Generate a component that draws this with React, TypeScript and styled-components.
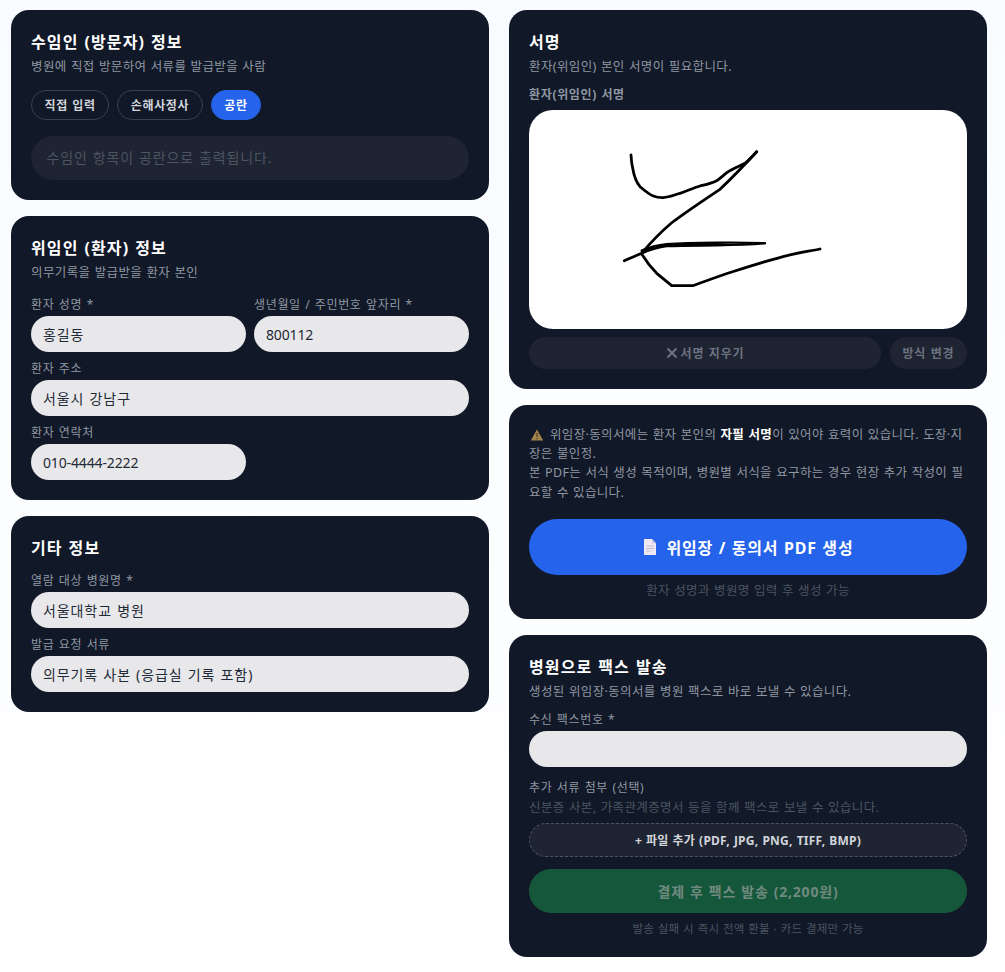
import React from 'react';
import styled, { createGlobalStyle } from 'styled-components';

const Global = createGlobalStyle`
  * { box-sizing: border-box; }
  html, body { margin: 0; padding: 0; background: #f9fbff; }
  body { font-family: "Noto Sans", "Noto Sans CJK KR", sans-serif; letter-spacing: .05em; word-spacing: .04em; }
  button, input { letter-spacing: inherit; word-spacing: inherit; }
`;

const Page = styled.div`
  display: grid;
  grid-template-columns: 478px 478px;
  gap: 20px;
  align-items: start;
  padding: 10px 18px 15px 11px;
  width: 1005px;
  min-height: 972px;
  background: linear-gradient(180deg, #f8fbff 0%, #ffffff 100%);
`;
const Column = styled.div`
  display: flex;
  flex-direction: column;
  gap: 16px;
`;
const Card = styled.section`
  background: #111827;
  border-radius: 18px;
  padding: 20px;
`;
const Title = styled.h2`
  margin: 0;
  font-size: 16px;
  line-height: 24px;
  font-weight: 700;
  letter-spacing: .07em;
  color: #ffffff;
`;
const Sub = styled.p`
  margin: 3px 0 0;
  font-size: 12.5px;
  line-height: 19px;
  letter-spacing: .03em;
  color: #8f97a3;
`;
const ChipRow = styled.div`
  display: flex;
  gap: 8px;
  margin-top: 14px;
`;
const Chip = styled.button<{ $active?: boolean }>`
  height: 30px;
  padding: 0 12.5px;
  border-radius: 15px;
  font-family: inherit;
  font-size: 12px;
  font-weight: 700;
  letter-spacing: .055em;
  white-space: nowrap;
  color: ${(p) => (p.$active ? '#ffffff' : '#d1d5db')};
  background: ${(p) => (p.$active ? '#2563eb' : 'transparent')};
  border: 1px solid ${(p) => (p.$active ? '#2563eb' : '#374151')};
`;
const Blank = styled.div`
  height: 44px;
  margin-top: 16px;
  padding: 0 15.5px;
  border-radius: 22px;
  background: #1f2432;
  color: #4b5563;
  font-size: 14px;
  line-height: 44px;
  letter-spacing: .06em;
`;
const Label = styled.label<{ $strong?: boolean; $top: number }>`
  display: block;
  height: ${(p) => (p.$strong ? 24 : 20)}px;
  margin-top: ${(p) => p.$top}px;
  font-size: 12px;
  line-height: 18px;
  letter-spacing: .055em;
  color: #8f97a3;
  font-weight: ${(p) => (p.$strong ? 700 : 400)};
`;
const Input = styled.input<{ $latin?: boolean }>`
  display: block;
  width: 100%;
  height: 36px;
  padding: 0 12px;
  border: 0;
  outline: 0;
  border-radius: 18px;
  background: #e8e8ea;
  color: #1f2937;
  font-family: inherit;
  font-size: 14px;
  letter-spacing: ${(p) => (p.$latin ? '-.01em' : '.065em')};
`;
const Pair = styled.div`
  display: grid;
  grid-template-columns: 1fr 1fr;
  gap: 8px;
`;
const SignPad = styled.div`
  height: 219px;
  background: #ffffff;
  border-radius: 24px;
  overflow: hidden;
  svg { display: block; width: 100%; height: 100%; }
`;
const SignActions = styled.div`
  display: flex;
  gap: 9px;
  margin-top: 8px;
`;
const GhostButton = styled.button<{ $grow?: boolean }>`
  display: flex;
  align-items: center;
  justify-content: center;
  gap: 3px;
  height: 32px;
  padding: 0;
  flex: ${(p) => (p.$grow ? 1 : '0 0 77px')};
  border: 0;
  border-radius: 16px;
  background: #1f2432;
  color: #6b7280;
  font-family: inherit;
  font-size: 12px;
  font-weight: 700;
`;
const Notice = styled.p`
  margin: 0;
  font-size: 12.5px;
  line-height: 19.2px;
  letter-spacing: .028em;
  color: #8f97a3;
  svg { vertical-align: -2px; margin: 0 6px 0 1px; }
  strong { color: #ffffff; font-weight: 700; }
`;
const PrimaryButton = styled.button`
  display: flex;
  align-items: center;
  justify-content: center;
  gap: 10px;
  width: 100%;
  height: 56px;
  margin-top: 17px;
  border: 0;
  border-radius: 28px;
  background: #2563eb;
  color: #ffffff;
  font-family: inherit;
  font-size: 16px;
  font-weight: 700;
`;
const Caption = styled.p<{ $top: number; $size: number; $tight?: boolean }>`
  margin: ${(p) => p.$top}px 0 0;
  text-align: center;
  font-size: ${(p) => p.$size}px;
  line-height: 17px;
  letter-spacing: ${(p) => (p.$tight ? '.015em' : '.03em')};
  color: #4b5563;
`;
const Hint = styled.p`
  margin: 0;
  font-size: 12.5px;
  line-height: 18px;
  letter-spacing: .03em;
  color: #4b5563;
`;
const AddFile = styled.button`
  display: block;
  width: 100%;
  height: 34px;
  margin-top: 6px;
  border: 1px dashed #4b5563;
  border-radius: 17px;
  background: #1f2432;
  color: #d1d5db;
  font-family: inherit;
  font-size: 12px;
  font-weight: 700;
  letter-spacing: .02em;
`;
const FaxButton = styled.button`
  display: block;
  width: 100%;
  height: 44px;
  margin-top: 12px;
  border: 0;
  border-radius: 22px;
  background: #15573a;
  color: #718a80;
  font-family: inherit;
  font-size: 14px;
  font-weight: 700;
`;

const WarnIcon = () => (
  <svg width="14" height="12" viewBox="0 0 13 12" aria-hidden="true">
    <path d="M6.5 .6 12.7 11.5H.3Z" fill="#a5834c" />
    <path d="M6 4h1v4H6zM6 9h1v1.2H6z" fill="#3b2f1e" />
  </svg>
);
const DocIcon = () => (
  <svg width="14" height="16" viewBox="0 0 14 16" aria-hidden="true">
    <path d="M1 0h8l4 4.2V16H1Z" fill="#efe9f5" />
    <path d="M9 0v4.2h4Z" fill="#c9c3d6" />
    <path d="M3 7h8M3 9.5h8M3 12h5" stroke="#c3bdd2" strokeWidth="1" />
  </svg>
);
const CrossIcon = () => (
  <svg width="12" height="12" viewBox="0 0 12 12" aria-hidden="true">
    <path d="M1.5 1.5 10.5 10.5M10.5 1.5 1.5 10.5" stroke="#6b7280" strokeWidth="2" />
  </svg>
);
const Signature = () => (
  <svg viewBox="529 110 438 219" aria-label="서명" role="img">
    <g fill="none" stroke="#000" strokeWidth="2.8" strokeLinecap="round" strokeLinejoin="round">
      <path d="M631 155C631.3 161 631.5 163 632.7 168.3C634 176 636 182 640 186.7C645 191 649 194.5 653.3 196C657 197.6 660 197.8 663.3 197.7C669 197 674 195.5 680 193.3C687 191 693 188 700 186C706 184.5 711 183.5 716.7 180.7C721 178 724 174.5 728.3 171.7C734 168 740 166 745 163.3C749.5 160 753 156 756.7 151.7" />
      <path d="M756.7 151.7C749 160 735 175 720 189.3C704 200 688 210.5 672 222.5C662 231 651 242 641.7 253.3C636 256 630 258 624.3 260.7" />
      <path d="M641.7 250.7C649 247.5 657 245.3 666.7 244.3C683 243 700 242.8 716.7 242.7C733 242.5 750 242.7 765 243.3C750 244.5 733 245 716.7 245.3C700 245.5 683 245.5 666.7 246C657 247 649 250 641.7 253.3" strokeWidth="2.4" />
      <path d="M641.7 254C646 261 651 267.5 656.7 273.3L671.7 285.7H692.7C706 281 719 276 733.3 271.5C752 265.5 771 259.5 790 254.8C800 252.5 810 251 820 249" />
    </g>
  </svg>
);

export default function App() {
  return (
    <>
      <Global />
      <Page>
        <Column>
          <Card>
            <Title>수임인 (방문자) 정보</Title>
            <Sub>병원에 직접 방문하여 서류를 발급받을 사람</Sub>
            <ChipRow>
              <Chip>직접 입력</Chip>
              <Chip>손해사정사</Chip>
              <Chip $active>공란</Chip>
            </ChipRow>
            <Blank>수임인 항목이 공란으로 출력됩니다.</Blank>
          </Card>
          <Card>
            <Title>위임인 (환자) 정보</Title>
            <Sub>의무기록을 발급받을 환자 본인</Sub>
            <Pair>
              <div>
                <Label $top={14}>환자 성명 *</Label>
                <Input readOnly value="홍길동" />
              </div>
              <div>
                <Label $top={14}>생년월일 / 주민번호 앞자리 *</Label>
                <Input $latin readOnly value="800112" />
              </div>
            </Pair>
            <Label $top={8}>환자 주소</Label>
            <Input readOnly value="서울시 강남구" />
            <Label $top={8}>환자 연락처</Label>
            <Pair>
              <Input $latin readOnly value="010-4444-2222" />
            </Pair>
          </Card>
          <Card>
            <Title>기타 정보</Title>
            <Label $top={12}>열람 대상 병원명 *</Label>
            <Input readOnly value="서울대학교 병원" />
            <Label $top={8}>발급 요청 서류</Label>
            <Input readOnly value="의무기록 사본 (응급실 기록 포함)" />
          </Card>
        </Column>
        <Column>
          <Card>
            <Title>서명</Title>
            <Sub>환자(위임인) 본인 서명이 필요합니다.</Sub>
            <Label $strong $top={10}>환자(위임인) 서명</Label>
            <SignPad>
              <Signature />
            </SignPad>
            <SignActions>
              <GhostButton $grow><CrossIcon />서명 지우기</GhostButton>
              <GhostButton>방식 변경</GhostButton>
            </SignActions>
          </Card>
          <Card>
            <Notice>
              <WarnIcon />위임장·동의서에는 환자 본인의 <strong>자필 서명</strong>이 있어야 효력이 있습니다. 도장·지장은 불인정.
              <br />본 PDF는 서식 생성 목적이며, 병원별 서식을 요구하는 경우 현장 추가 작성이 필요할 수 있습니다.
            </Notice>
            <PrimaryButton>
              <DocIcon />위임장 / 동의서 PDF 생성
            </PrimaryButton>
            <Caption $top={7.5} $size={12.5}>환자 성명과 병원명 입력 후 생성 가능</Caption>
          </Card>
          <Card>
            <Title>병원으로 팩스 발송</Title>
            <Sub>생성된 위임장·동의서를 병원 팩스로 바로 보낼 수 있습니다.</Sub>
            <Label $top={10}>수신 팩스번호 *</Label>
            <Input readOnly value="" />
            <Label $top={12}>추가 서류 첨부 (선택)</Label>
            <Hint>신분증 사본, 가족관계증명서 등을 함께 팩스로 보낼 수 있습니다.</Hint>
            <AddFile>+ 파일 추가 (PDF, JPG, PNG, TIFF, BMP)</AddFile>
            <FaxButton>결제 후 팩스 발송 (2,200원)</FaxButton>
            <Caption $top={7} $size={11.5} $tight>발송 실패 시 즉시 전액 환불 · 카드 결제만 가능</Caption>
          </Card>
        </Column>
      </Page>
    </>
  );
}
